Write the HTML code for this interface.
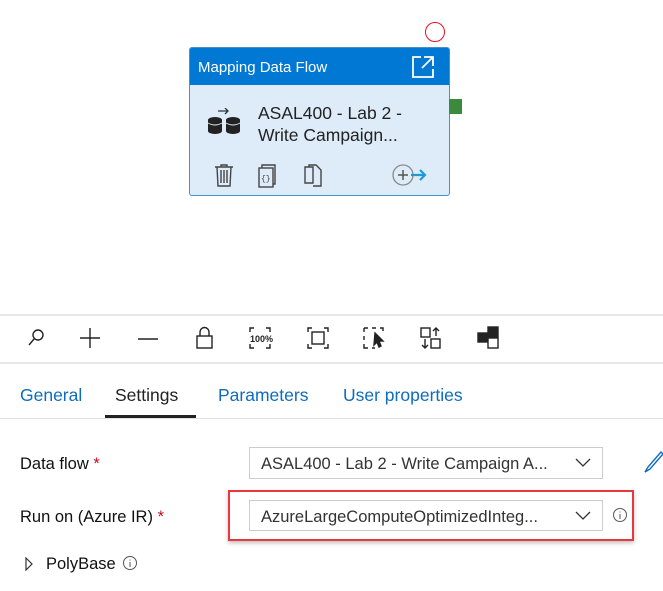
<!DOCTYPE html>
<html><head><style>
body{margin:0;width:663px;height:591px;background:#fff;font-family:"Liberation Sans",sans-serif;position:relative;overflow:hidden}
.a{position:absolute}
</style></head><body>
<div class="a" style="left:425px;top:22px;width:18px;height:18px;border:1.5px solid #e81123;border-radius:50%"></div>
<div class="a" style="left:189px;top:47px;width:259px;height:147px;border:1px solid #4a90c8;border-radius:3px;background:#deecf9;overflow:hidden">
 <div style="height:37px;background:#0078d4;color:#fff;font-size:15px;line-height:40px;padding-left:8px">Mapping Data Flow</div>
 <svg class="a" style="left:220px;top:6px" width="26" height="26" viewBox="0 0 26 26" fill="none" stroke="#fff" stroke-width="1.8"><path d="M11 3H3v20h20v-8"/><path d="M14 3h9v9M23 3L12 14"/></svg>
 <svg class="a" style="left:16px;top:60px" width="36" height="28" viewBox="0 0 36 28"><path d="M12 3h10M19 0l3 3-3 3" stroke="#333" fill="none" stroke-width="1.3"/><ellipse cx="9" cy="12" rx="7" ry="3" fill="#222"/><rect x="2" y="12" width="14" height="11" fill="#222"/><ellipse cx="9" cy="23" rx="7" ry="3" fill="#222"/><ellipse cx="27" cy="12" rx="7" ry="3" fill="#222"/><rect x="20" y="12" width="14" height="11" fill="#222"/><ellipse cx="27" cy="23" rx="7" ry="3" fill="#222"/><path d="M2 15q7 4 14 0M20 15q7 4 14 0" stroke="#deecf9" fill="none"/></svg>
 <div class="a" style="left:68px;top:54px;font-size:17.5px;line-height:22px;color:#222">ASAL400 - Lab 2 -<br>Write Campaign...</div>
 <svg class="a" style="left:24px;top:116px" width="20" height="24" viewBox="0 0 20 24" fill="none" stroke="#444" stroke-width="1.4"><path d="M1 3h18M7 3V1h6v2M3 3l1 19h12l1-19M7 6v13M10 6v13M13 6v13"/></svg>
 <svg class="a" style="left:67px;top:116px" width="22" height="24" viewBox="0 0 22 24" fill="none" stroke="#444" stroke-width="1.4"><rect x="2" y="4" width="14" height="19"/><path d="M5 4V1h13v19h-2"/><text x="4" y="17" font-size="8" fill="#444" stroke="none" font-family="Liberation Mono">{}</text></svg>
 <svg class="a" style="left:113px;top:116px" width="22" height="24" viewBox="0 0 22 24" fill="none" stroke="#444" stroke-width="1.4"><path d="M2 3h8v16H2zM6 3V1h7l5 5v16H10"/></svg>
 <svg class="a" style="left:201px;top:115px" width="40" height="24" viewBox="0 0 40 24" fill="none"><circle cx="12" cy="12" r="10" stroke="#888" stroke-width="1.3"/><path d="M7 12h10M12 7v10" stroke="#555" stroke-width="1.5"/><path d="M20 12h14M29 7l5 5-5 5" stroke="#1e9bd7" stroke-width="2.2"/></svg>
</div>
<div class="a" style="left:449px;top:99px;width:13px;height:15px;background:#3c8a3c"></div>
<div class="a" style="left:0;top:314px;width:663px;height:2px;background:#e8e8e8"></div>
<div class="a" style="left:0;top:362px;width:663px;height:2px;background:#e8e8e8"></div>
<svg class="a" style="left:20px;top:322px" width="490" height="32" viewBox="0 0 490 32" fill="none" stroke="#222" stroke-width="1.4">
 <circle cx="18" cy="13" r="5"/><path d="M14 17l-5 6"/>
 <path d="M60 16h20M70 6v20"/>
 <path d="M118 17h20"/>
 <rect x="177" y="14" width="15" height="12"/><path d="M180 14v-4a4.5 4.5 0 0 1 9 0v4"/>
 <path d="M230 10v-4h4M246 6h4v4M230 22v4h4M246 26h4v-4"/><text x="230" y="20" font-size="9" fill="#222" stroke="none" font-weight="bold">100%</text>
 <path d="M288 10v-4h4M304 6h4v4M288 22v4h4M304 26h4v-4"/><rect x="292" y="10" width="12" height="12"/>
 <path d="M344 6h4M352 6h4M360 6h3v3M344 6v4M344 14v4M344 22v4h4M352 26h3"/><path d="M355 11l8 8-4 0 2 5-2 1-2-5-3 3z" fill="#222"/>
 <rect x="401" y="6" width="9" height="9"/><rect x="411" y="17" width="9" height="9"/><path d="M416 14V6M413 9l3-3 3 3M405 17v9M402 23l3 3 3-3"/>
 <rect x="458" y="11" width="9" height="9" fill="#222"/><rect x="468" y="5" width="10" height="10" fill="#222"/><rect x="468" y="16" width="10" height="10"/>
</svg>
<div class="a" style="left:20px;top:385px;font-size:17.5px;color:#0f6cbd">General</div>
<div class="a" style="left:115px;top:385px;font-size:17.5px;color:#222">Settings</div>
<div class="a" style="left:218px;top:385px;font-size:17.5px;color:#0f6cbd">Parameters</div>
<div class="a" style="left:343px;top:385px;font-size:17.5px;color:#0f6cbd">User properties</div>
<div class="a" style="left:105px;top:415px;width:91px;height:3px;background:#222"></div>
<div class="a" style="left:0;top:418px;width:663px;height:1px;background:#e1e1e1"></div>
<div class="a" style="left:20px;top:455px;font-size:16.5px;color:#111">Data flow <span style="color:#c50f1f">*</span></div>
<div class="a" style="left:249px;top:447px;width:354px;height:32px;border:1px solid #ccc;box-sizing:border-box"></div>
<div class="a" style="left:261px;top:455px;font-size:16.5px;color:#333">ASAL400 - Lab 2 - Write Campaign A...</div>
<svg class="a" style="left:575px;top:458px" width="16" height="10" viewBox="0 0 16 10" fill="none" stroke="#333" stroke-width="1.3"><path d="M1 1l7 7 7-7"/></svg>
<svg class="a" style="left:643px;top:450px" width="20" height="24" viewBox="0 0 20 24" fill="none" stroke="#0f6cbd" stroke-width="1.4"><path d="M18 2l-13 15-3 5 5-3 13-15z"/></svg>
<div class="a" style="left:228px;top:490px;width:406px;height:51px;border:2px solid #e8383d;box-sizing:border-box;box-shadow:0 2px 4px rgba(0,0,0,.25)"></div>
<div class="a" style="left:20px;top:508px;font-size:16.5px;color:#111">Run on (Azure IR) <span style="color:#c50f1f">*</span></div>
<div class="a" style="left:249px;top:500px;width:354px;height:31px;border:1px solid #ccc;box-sizing:border-box"></div>
<div class="a" style="left:261px;top:508px;font-size:16.5px;color:#333">AzureLargeComputeOptimizedInteg...</div>
<svg class="a" style="left:575px;top:511px" width="16" height="10" viewBox="0 0 16 10" fill="none" stroke="#333" stroke-width="1.3"><path d="M1 1l7 7 7-7"/></svg>
<svg class="a" style="left:612px;top:507px" width="16" height="16" viewBox="0 0 16 16" fill="none" stroke="#555"><circle cx="8" cy="8" r="6.5"/><path d="M8 7v5M8 4.5v1"/></svg>
<svg class="a" style="left:24px;top:557px" width="10" height="14" viewBox="0 0 10 14" fill="none" stroke="#333" stroke-width="1.2"><path d="M2 1l6 6-6 6z"/></svg>
<div class="a" style="left:46px;top:555px;font-size:16.5px;color:#111">PolyBase</div>
<svg class="a" style="left:122px;top:555px" width="16" height="16" viewBox="0 0 16 16" fill="none" stroke="#555"><circle cx="8" cy="8" r="6.5"/><path d="M8 7v5M8 4.5v1"/></svg>
</body></html>
